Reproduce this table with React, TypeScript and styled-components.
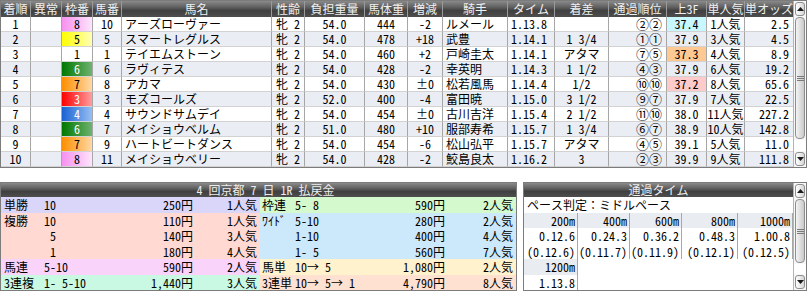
import React from "react";
import styled, { createGlobalStyle } from "styled-components";

const GlobalStyle = createGlobalStyle`
  html, body { margin: 0; padding: 0; background: #ffffff; }
  body {
    font-family: "Noto Sans Mono CJK JP", "Noto Sans CJK JP", "DejaVu Sans", sans-serif;
    font-size: 12px;
    color: #000;
  }
  * { box-sizing: border-box; }
`;

const COLS = [30, 31, 31, 29, 150, 33, 60, 43, 35, 65, 47, 54, 58, 40, 38, 48];
const TEMPLATE = COLS.map((c) => `${c}px`).join(" ");

const HEADERS = [
  "着順", "異常", "枠番", "馬番", "馬名", "性齢", "負担重量", "馬体重", "増減",
  "騎手", "タイム", "着差", "通過順位", "上3F", "単人気", "単オッズ",
];

const WAKU: Record<number, { from: string; to: string; fg: string }> = {
  1: { from: "#ffffff", to: "#ffffff", fg: "#000" },
  3: { from: "#ff0000", to: "#ff9e9e", fg: "#fff" },
  4: { from: "#1a62d4", to: "#96bff2", fg: "#fff" },
  5: { from: "#ffff00", to: "#ffffb8", fg: "#000" },
  6: { from: "#007800", to: "#6fb26f", fg: "#fff" },
  7: { from: "#ff8e00", to: "#ffd9a6", fg: "#000" },
  8: { from: "#f690ef", to: "#fde4fb", fg: "#000" },
};

type Horse = {
  rank: string; waku: number; num: string; name: string; sex: string; wt: string;
  body: string; diff: string; jockey: string; time: string; margin: string;
  pass: string; f3: string; f3bg?: string; pop: string; odds: string;
};

const HORSES: Horse[] = [
  { rank: "1", waku: 8, num: "10", name: "アーズローヴァー", sex: "牝 2", wt: "54.0", body: "444", diff: "-2", jockey: "ルメール", time: "1.13.8", margin: "", pass: "②②", f3: "37.4", f3bg: "#c8f7fd", pop: "1人気", odds: "2.5" },
  { rank: "2", waku: 5, num: "5", name: "スマートレグルス", sex: "牝 2", wt: "54.0", body: "478", diff: "+18", jockey: "武豊", time: "1.14.1", margin: "1 3/4", pass: "①①", f3: "37.9", pop: "3人気", odds: "4.5" },
  { rank: "3", waku: 1, num: "1", name: "テイエムストーン", sex: "牝 2", wt: "54.0", body: "460", diff: "+2", jockey: "戸崎圭太", time: "1.14.1", margin: "アタマ", pass: "⑦⑤", f3: "37.3", f3bg: "#ffc994", pop: "4人気", odds: "8.9" },
  { rank: "4", waku: 6, num: "6", name: "ラヴィテス", sex: "牝 2", wt: "54.0", body: "428", diff: "-2", jockey: "幸英明", time: "1.14.3", margin: "1 1/2", pass: "④③", f3: "37.9", pop: "6人気", odds: "19.2" },
  { rank: "5", waku: 7, num: "8", name: "アカマ", sex: "牝 2", wt: "54.0", body: "430", diff: "±0", jockey: "松若風馬", time: "1.14.4", margin: "1/2", pass: "⑩⑩", f3: "37.2", f3bg: "#ffcaca", pop: "8人気", odds: "65.6" },
  { rank: "6", waku: 3, num: "3", name: "モズコールズ", sex: "牝 2", wt: "52.0", body: "400", diff: "-4", jockey: "富田暁", time: "1.15.0", margin: "3 1/2", pass: "⑨⑦", f3: "37.9", pop: "7人気", odds: "22.5" },
  { rank: "7", waku: 4, num: "4", name: "サウンドサムデイ", sex: "牝 2", wt: "54.0", body: "454", diff: "±0", jockey: "古川吉洋", time: "1.15.4", margin: "2 1/2", pass: "⑪⑩", f3: "38.0", pop: "11人気", odds: "227.2" },
  { rank: "8", waku: 6, num: "7", name: "メイショウベルム", sex: "牝 2", wt: "51.0", body: "480", diff: "+10", jockey: "服部寿希", time: "1.15.7", margin: "1 3/4", pass: "⑥⑦", f3: "38.9", pop: "10人気", odds: "142.8" },
  { rank: "9", waku: 7, num: "9", name: "ハートビートダンス", sex: "牝 2", wt: "54.0", body: "454", diff: "-6", jockey: "松山弘平", time: "1.15.7", margin: "アタマ", pass: "④⑤", f3: "39.1", pop: "5人気", odds: "11.0" },
  { rank: "10", waku: 8, num: "11", name: "メイショウベリー", sex: "牝 2", wt: "54.0", body: "428", diff: "-2", jockey: "鮫島良太", time: "1.16.2", margin: "3", pass: "②③", f3: "39.9", pop: "9人気", odds: "111.8" },
];

type Pay = { label: string; combo: string; amount: string; pop: string; bg: string };

const LEFT_PAY: Pay[] = [
  { label: "単勝", combo: "10", amount: "250円", pop: "1人気", bg: "#dad6fa" },
  { label: "複勝", combo: "10", amount: "110円", pop: "1人気", bg: "#ffd9d2" },
  { label: "", combo: " 5", amount: "140円", pop: "3人気", bg: "#ffd9d2" },
  { label: "", combo: " 1", amount: "180円", pop: "4人気", bg: "#ffd9d2" },
  { label: "馬連", combo: "5-10", amount: "590円", pop: "2人気", bg: "#f9d3f9" },
  { label: "3連複", combo: "1- 5-10", amount: "1,440円", pop: "3人気", bg: "#c9f9e2" },
];

const RIGHT_PAY: Pay[] = [
  { label: "枠連", combo: "5- 8", amount: "590円", pop: "2人気", bg: "#d3f9cc" },
  { label: "ﾜｲﾄﾞ", combo: "5-10", amount: "280円", pop: "2人気", bg: "#cbe9fa" },
  { label: "", combo: "1-10", amount: "400円", pop: "4人気", bg: "#cbe9fa" },
  { label: "", combo: "1- 5", amount: "560円", pop: "7人気", bg: "#cbe9fa" },
  { label: "馬単", combo: "10→ 5", amount: "1,080円", pop: "2人気", bg: "#fff2cc" },
  { label: "3連単", combo: "10→ 5→ 1", amount: "4,790円", pop: "8人気", bg: "#ffe1d2" },
];

const HEADER_BG =
  "linear-gradient(to bottom, #8a8a8a 0%, #5e5e5e 40%, #404040 60%, #4e4e4e 100%)";

/* ---------- layout ---------- */

const Page = styled.div`
  width: 807px;
  display: flex;
  flex-direction: column;
`;

const TableFrame = styled.div`
  display: flex;
  border: 1px solid #7c7c7c;
  height: 168px;
`;

const Grid = styled.div`
  width: 792px;
  display: flex;
  flex-direction: column;
`;

const HeaderRow = styled.div`
  display: grid;
  grid-template-columns: ${TEMPLATE};
  height: 16px;
  background: ${HEADER_BG};
`;

const HeaderCell = styled.div`
  color: #f0f0f0;
  text-align: center;
  line-height: 16px;
  white-space: nowrap;
  border-right: 1px solid #9a9a9a;
  &:last-child { border-right: none; }
`;

const Row = styled.div<{ $alt: boolean }>`
  display: grid;
  grid-template-columns: ${TEMPLATE};
  height: 15px;
  background: ${(p) => (p.$alt ? "#eaeef4" : "#ffffff")};
`;

const Cell = styled.div<{ $align?: "left" | "center" | "right"; $bg?: string; $big?: boolean }>`
  height: 15px;
  line-height: 14px;
  font-size: ${(p) => (p.$big ? "13px" : "12px")};
  white-space: pre;
  text-align: ${(p) => p.$align ?? "center"};
  padding: ${(p) => (p.$align === "left" ? "0 0 0 3px" : p.$align === "right" ? "0 4px 0 0" : "0")};
  background: ${(p) => p.$bg ?? "transparent"};
  border-right: 1px solid #a6a6a6;
  border-bottom: 1px solid #d2d2d2;
  &:last-child { border-right: none; }
`;

const WakuCell = styled(Cell)<{ $waku: number }>`
  background: ${(p) => `linear-gradient(to right, ${WAKU[p.$waku].from}, ${WAKU[p.$waku].to})`};
  color: ${(p) => WAKU[p.$waku].fg};
`;

/* ---------- scrollbar ---------- */

const ScrollTrack = styled.div`
  width: 13px;
  display: flex;
  flex-direction: column;
  gap: 1px;
  padding: 1px 0;
  background: #f7f7f7;
  border-left: 1px solid #b4b4b4;
`;

const ArrowBtn = styled.div`
  height: 14px;
  margin: 0 1px;
  border: 1px solid #8e8e8e;
  border-radius: 3px;
  background: linear-gradient(to right, #ffffff, #d6d6d6);
  display: flex;
  align-items: center;
  justify-content: center;
`;

const Thumb = styled.div<{ $h: number }>`
  height: ${(p) => p.$h}px;
  margin: 0 1px;
  border: 1px solid #8e8e8e;
  border-radius: 4px;
  background: linear-gradient(to right, #f4f4f4, #c9c9c9);
  display: flex;
  align-items: center;
  justify-content: center;
`;

const TrackRest = styled.div`
  flex: 1;
  background: #ffffff;
`;

const Tri = ({ up }: { up: boolean }) => (
  <svg width="7" height="4" viewBox="0 0 7 4">
    <polygon points={up ? "3.5,0 7,4 0,4" : "0,0 7,0 3.5,4"} fill="#1a1a1a" />
  </svg>
);

const Grip = () => (
  <svg width="7" height="5" viewBox="0 0 7 5">
    <rect x="0" y="0" width="7" height="1" fill="#7a7a7a" />
    <rect x="0" y="2" width="7" height="1" fill="#7a7a7a" />
    <rect x="0" y="4" width="7" height="1" fill="#7a7a7a" />
  </svg>
);

const Scrollbar = ({ thumb }: { thumb: number }) => (
  <ScrollTrack>
    <ArrowBtn><Tri up /></ArrowBtn>
    <Thumb $h={thumb}><Grip /></Thumb>
    <TrackRest />
    <ArrowBtn><Tri up={false} /></ArrowBtn>
  </ScrollTrack>
);

/* ---------- bottom panels ---------- */

const Bottom = styled.div`
  display: flex;
  gap: 6px;
  margin-top: 14px;
`;

const Panel = styled.div<{ $w: number }>`
  width: ${(p) => p.$w}px;
  height: 109px;
  border: 1px solid #7c7c7c;
  display: flex;
`;

const PanelMain = styled.div`
  flex: 1;
  display: flex;
  flex-direction: column;
`;

const PanelHeader = styled.div<{ $shift?: number }>`
  height: 14px;
  line-height: 14px;
  text-align: center;
  padding-left: ${(p) => p.$shift ?? 0}px;
  color: #ececec;
  white-space: pre;
  background: ${HEADER_BG};
`;

const PayBody = styled.div`
  display: flex;
  flex: 1;
`;

const PayHalf = styled.div<{ $w: number }>`
  width: ${(p) => p.$w}px;
  display: flex;
  flex-direction: column;
`;

const PayRow = styled.div<{ $bg: string; $cols: string; $pad: number }>`
  display: grid;
  grid-template-columns: ${(p) => p.$cols};
  height: 15.5px;
  line-height: 15px;
  padding-left: ${(p) => p.$pad}px;
  background: ${(p) => p.$bg};
  white-space: pre;
`;

const PayNum = styled.span`
  text-align: right;
`;

const PaceLine = styled.div`
  height: 15.5px;
  line-height: 15px;
  padding-left: 3px;
  white-space: pre;
`;

const LapGrid = styled.div`
  display: grid;
  grid-template-columns: 54px 52px 52px 56px 55px;
  grid-auto-rows: 15.5px;
`;

const LapCell = styled.div<{ $head?: boolean; $empty?: boolean }>`
  line-height: 15px;
  text-align: right;
  padding-right: 2px;
  white-space: pre;
  background: ${(p) => (p.$head ? "#e9ecf0" : "#ffffff")};
  border-right: ${(p) => (p.$empty ? "none" : "1px solid #a8a8a8")};
`;

const LAP_HEAD = ["200m", "400m", "600m", "800m", "1000m"];
const LAP_TIME = ["0.12.6", "0.24.3", "0.36.2", "0.48.3", "1.00.8"];
const LAP_SPLIT = ["(0.12.6)", "(0.11.7)", "(0.11.9)", "(0.12.1)", "(0.12.5)"];

export default function App() {
  return (
    <>
      <GlobalStyle />
      <Page>
        <TableFrame>
          <Grid>
            <HeaderRow>
              {HEADERS.map((h) => (
                <HeaderCell key={h}>{h}</HeaderCell>
              ))}
            </HeaderRow>
            {HORSES.map((h, i) => (
              <Row key={h.rank} $alt={i % 2 === 1}>
                <Cell>{h.rank}</Cell>
                <Cell />
                <WakuCell $waku={h.waku}>{String(h.waku)}</WakuCell>
                <Cell>{h.num}</Cell>
                <Cell $align="left">{h.name}</Cell>
                <Cell>{h.sex}</Cell>
                <Cell>{h.wt}</Cell>
                <Cell>{h.body}</Cell>
                <Cell>{h.diff}</Cell>
                <Cell $align="left">{h.jockey}</Cell>
                <Cell $align="left">{h.time}</Cell>
                <Cell>{h.margin}</Cell>
                <Cell $align="right" $big>{h.pass}</Cell>
                <Cell $bg={h.f3bg}>{h.f3}</Cell>
                <Cell>{h.pop}</Cell>
                <Cell $align="right">{h.odds}</Cell>
              </Row>
            ))}
          </Grid>
          <Scrollbar thumb={122} />
        </TableFrame>

        <Bottom>
          <Panel $w={517}>
            <PanelMain>
              <PanelHeader $shift={14}>{"4 回京都 7 日 1R 払戻金"}</PanelHeader>
              <PayBody>
                <PayHalf $w={259}>
                  {LEFT_PAY.map((p, i) => (
                    <PayRow key={i} $bg={p.bg} $cols="40px 76px 73px 64px" $pad={3}>
                      <span>{p.label}</span>
                      <span>{p.combo}</span>
                      <PayNum>{p.amount}</PayNum>
                      <PayNum>{p.pop}</PayNum>
                    </PayRow>
                  ))}
                </PayHalf>
                <PayHalf $w={256}>
                  {RIGHT_PAY.map((p, i) => (
                    <PayRow key={i} $bg={p.bg} $cols="33px 88px 62px 68px" $pad={2}>
                      <span>{p.label}</span>
                      <span>{p.combo}</span>
                      <PayNum>{p.amount}</PayNum>
                      <PayNum>{p.pop}</PayNum>
                    </PayRow>
                  ))}
                </PayHalf>
              </PayBody>
            </PanelMain>
          </Panel>

          <Panel $w={284}>
            <PanelMain>
              <PanelHeader>通過タイム</PanelHeader>
              <PaceLine>ペース判定：ミドルペース</PaceLine>
              <LapGrid>
                {LAP_HEAD.map((t) => (
                  <LapCell key={t} $head>{t}</LapCell>
                ))}
                {LAP_TIME.map((t) => (
                  <LapCell key={t}>{t}</LapCell>
                ))}
                {LAP_SPLIT.map((t) => (
                  <LapCell key={t}>{t}</LapCell>
                ))}
                <LapCell $head>1200m</LapCell>
                <LapCell $empty />
                <LapCell $empty />
                <LapCell $empty />
                <LapCell $empty />
                <LapCell>1.13.8</LapCell>
              </LapGrid>
            </PanelMain>
            <Scrollbar thumb={64} />
          </Panel>
        </Bottom>
      </Page>
    </>
  );
}
